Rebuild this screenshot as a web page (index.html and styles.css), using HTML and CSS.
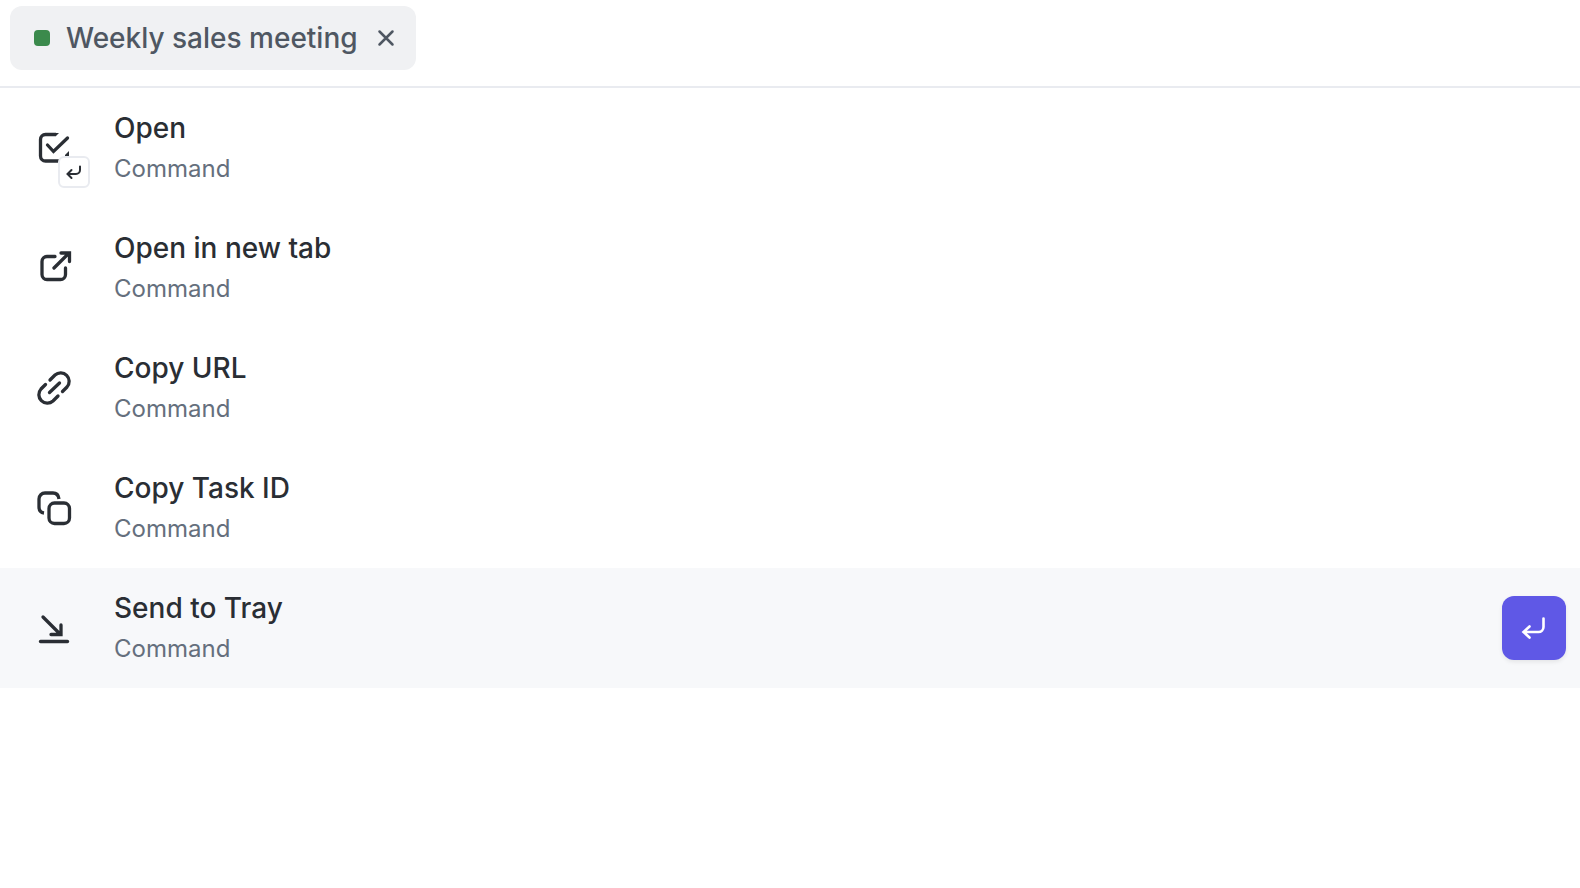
FILE: index.html
```html
<!DOCTYPE html>
<html lang="en">
<head>
    <meta charset="UTF-8">
    <meta name="viewport" content="width=device-width, initial-scale=1.0">
    <title>Weekly sales meeting</title>
    <link rel="stylesheet" href="styles.css">
</head>
<body>
    <header class="bar">
        <div class="tag">
            <span class="status"></span>
            <span class="tag-name">Weekly sales meeting</span>
            <button class="tag-close" type="button" aria-label="Remove">
                <svg viewBox="0 0 20 20"><path d="M3.5 3.5L16.5 16.5M16.5 3.5L3.5 16.5"/></svg>
            </button>
        </div>
    </header>

    <ul class="commands">
        <li class="row">
            <button class="command" type="button">
                <span class="icon">
                    <svg viewBox="0 0 48 48">
                        <path class="flat" d="M26 10.5H15.5A5 5 0 0 0 10.5 15.5V32A5 5 0 0 0 15.5 37H32"/>
                        <path d="M17.5 21L23.5 27.5L37.5 14"/>
                        <path class="fill" d="M25 9H29L26 12H25Z"/>
                        <path class="fill" d="M39 27V33H35V31Z"/>
                    </svg>
                    <span class="key">
                        <svg viewBox="0 0 28 28"><path d="M20 8.5V12A4 4 0 0 1 16 16H8M11.5 12L7.5 16L11.5 20"/></svg>
                    </span>
                </span>
                <span class="text">
                    <span class="name">Open</span>
                    <span class="type">Command</span>
                </span>
            </button>
        </li>
        <li class="row">
            <button class="command" type="button">
                <span class="icon">
                    <svg viewBox="0 0 48 48">
                        <path d="M25 12.5H17A5 5 0 0 0 12 17.5V30.5A5 5 0 0 0 17 35.5H30.5A5 5 0 0 0 35.5 30.5V24"/>
                        <path d="M24 24L39 9M31 9H39.5V17.5"/>
                    </svg>
                </span>
                <span class="text">
                    <span class="name">Open in new tab</span>
                    <span class="type">Command</span>
                </span>
            </button>
        </li>
        <li class="row">
            <button class="command" type="button">
                <span class="icon">
                    <svg viewBox="0 0 48 48">
                        <path d="M20 16L25 11A8.5 8.5 0 0 1 37 23L32.5 27.5"/>
                        <path d="M28 32L23 37A8.5 8.5 0 0 1 11 25L15.5 20.5"/>
                        <path d="M19.5 28.5L29.5 19"/>
                    </svg>
                </span>
                <span class="text">
                    <span class="name">Copy URL</span>
                    <span class="type">Command</span>
                </span>
            </button>
        </li>
        <li class="row">
            <button class="command" type="button">
                <span class="icon">
                    <svg viewBox="0 0 48 48">
                        <rect x="19" y="19" width="20.5" height="20.5" rx="5.5"/>
                        <path class="flat" d="M29 15C28.5 11 26.5 9 23 9H15A6 6 0 0 0 9 15V23C9 26.5 10.5 28.5 14 29"/>
                    </svg>
                </span>
                <span class="text">
                    <span class="name">Copy Task ID</span>
                    <span class="type">Command</span>
                </span>
            </button>
        </li>
        <li class="row active">
            <button class="command" type="button">
                <span class="icon">
                    <svg viewBox="0 0 48 48">
                        <path d="M13 13L30.5 30.5M31 21V30.5H21"/>
                        <path d="M10.5 37.5H37.5"/>
                    </svg>
                </span>
                <span class="text">
                    <span class="name">Send to Tray</span>
                    <span class="type">Command</span>
                </span>
            </button>
            <button class="run" type="button" aria-label="Run command">
                <svg viewBox="0 0 64 64"><path d="M41.5 22.5V31A5 5 0 0 1 36.5 36H22M27.5 30.5L21.5 36L27.5 41.5"/></svg>
            </button>
        </li>
    </ul>
</body>
</html>
```
FILE: styles.css
```css
* {
    box-sizing: border-box;
}
body {
    margin: 0;
    background: #fff;
    color: #2a2e34;
    font-family: Inter, sans-serif;
}
button {
    padding: 0;
    border: none;
    background: none;
    color: inherit;
    font: inherit;
    cursor: pointer;
}
svg {
    display: block;
    width: 100%;
    height: 100%;
    fill: none;
    stroke: currentColor;
    stroke-width: 3;
    stroke-linecap: round;
}
.bar {
    display: flex;
    padding: 6px 10px 16px;
    border-bottom: 2px solid #e9ebf0;
}
.tag {
    display: flex;
    align-items: center;
    gap: 16px;
    height: 64px;
    padding: 0 20px 0 24px;
    border-radius: 12px;
    background: #f0f1f3;
    color: #4f5762;
}
.status {
    width: 16px;
    height: 16px;
    border-radius: 4px;
    background: #3b8a4c;
}
.tag-name {
    font-size: 28px;
    font-weight: 500;
}
.tag-close {
    width: 20px;
    height: 20px;
    margin-left: 2px;
}
.tag-close svg {
    stroke-width: 2.5;
}
.commands {
    margin: 0;
    padding: 0;
    list-style: none;
}
.row {
    display: flex;
    align-items: center;
    padding-right: 14px;
}
.active {
    background: #f7f8fa;
}
.command {
    display: flex;
    flex: 1;
    align-items: center;
    gap: 36px;
    padding: 19px 30px;
    text-align: left;
}
.icon {
    position: relative;
    width: 48px;
    height: 48px;
}
.icon > svg {
    stroke-width: 3.3;
}
.icon .flat {
    stroke-linecap: butt;
}
.icon .fill {
    fill: currentColor;
    stroke: none;
}
.key {
    position: absolute;
    right: -12px;
    bottom: -16px;
    width: 32px;
    height: 32px;
    border: 2px solid #e9ebf0;
    border-radius: 6px;
    background: #fff;
}
.key svg {
    stroke-width: 2;
}
.text {
    display: flex;
    flex-direction: column;
}
.name {
    font-size: 28px;
    font-weight: 500;
    line-height: 42px;
}
.type {
    color: #656f7d;
    font-size: 24px;
    line-height: 40px;
}
.run {
    width: 64px;
    height: 64px;
    border-radius: 12px;
    background: #5f58e6;
    box-shadow: 0 2px 4px rgba(0, 0, 0, 0.08);
    color: #fff;
}
.run svg {
    stroke-width: 2.6;
}
```
